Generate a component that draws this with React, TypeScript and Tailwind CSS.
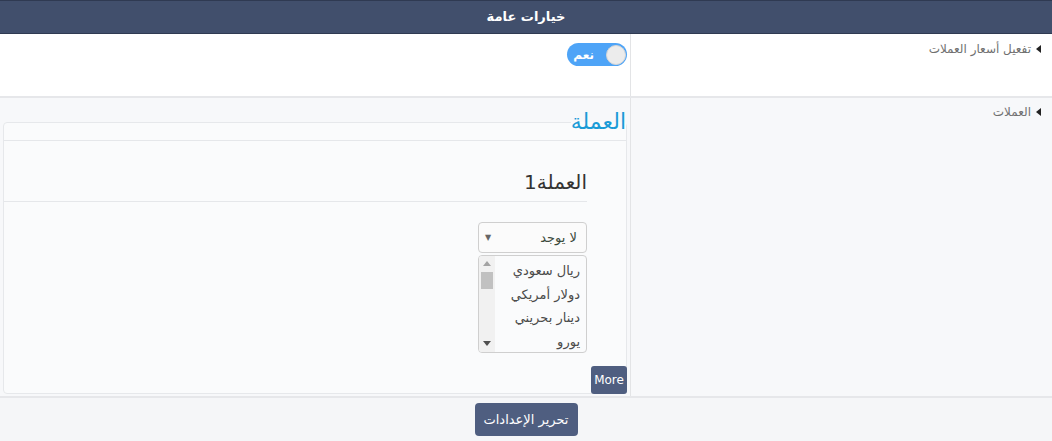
import React from "react";

function Tri() {
  return (
    <svg width="5" height="8" viewBox="0 0 5 8" className="shrink-0 mt-[5px]">
      <polygon points="5,0 5,8 0,4" fill="#222" />
    </svg>
  );
}

export default function App() {
  const options = ["ريال سعودي", "دولار أمريكي", "دينار بحريني", "يورو"];
  return (
    <div dir="rtl" className="w-[1052px] h-[441px] font-['DejaVu_Sans',sans-serif] text-[12px] bg-white overflow-hidden">
      <div className="h-[34px] bg-[#414f6c] border-t border-b border-[#2f3a52] flex items-center justify-center text-white font-bold text-[13px]">
        خيارات عامة
      </div>

      <div className="flex h-[64px] border-b-2 border-[#e6e7ea] bg-white">
        <div className="w-[422px] border-l border-[#e3e4e6] pr-[11px] pt-[6px] flex items-start gap-[5px] text-[#707070]">
          <Tri />
          <span>تفعيل أسعار العملات</span>
        </div>
        <div className="flex-1 pt-[9px] pr-[3px]">
          <div className="w-[60px] h-[23px] rounded-full bg-[#4ea4f7] flex items-center pr-[1px] gap-[12px]">
            <div className="w-[20px] h-[20px] rounded-full bg-[#ececec] border border-[#d6d6d6]" />
            <span className="text-white font-bold text-[12px] leading-none">نعم</span>
          </div>
        </div>
      </div>

      <div className="flex h-[300px] bg-[#f7f8fa] border-b-2 border-[#e6e7ea]">
        <div className="w-[422px] border-l border-[#e3e4e6] pr-[11px] pt-[5px] flex items-start gap-[5px] text-[#707070]">
          <Tri />
          <span>العملات</span>
        </div>
        <div className="flex-1 px-[3px] pt-[11px]">
          <fieldset className="border border-[#e6e8eb] rounded-[4px] bg-[#fafbfc] h-[285px] flex flex-col">
            <legend className="text-[22px] leading-[26px] text-[#1a9bd7] pr-0">العملة</legend>
            <div className="h-[6px] border-b border-[#e5e7ea]" />
            <div className="mr-[39px] pt-[27px] pb-[5px] border-b border-[#e5e7ea] text-[20px] leading-[28px] text-[#333]">
              العملة1
            </div>
            <div className="mr-[39px] mt-[20px] w-[109px]">
              <div className="h-[31px] border border-[#cfcfcf] rounded-[4px] bg-[#fbfbfb] flex items-center justify-between pr-[9px] pl-[6px] text-[13px] text-[#3b4a3b]">
                <span>لا يوجد</span>
                <span className="text-[8px] text-[#666]">▼</span>
              </div>
              <div className="mt-[2px] h-[98px] border border-[#cfcfcf] rounded-[4px] bg-[#fafbfc] flex overflow-hidden">
                <div className="flex-1 pr-[6px] pt-[3px] text-[13px] leading-[23.5px] text-[#4a4a4a]">
                  {options.map((o) => (
                    <div key={o}>{o}</div>
                  ))}
                </div>
                <div className="w-[16px] bg-[#f1f1f1] flex flex-col items-center">
                  <svg width="8" height="5" viewBox="0 0 8 5" className="mt-[5px]">
                    <polygon points="0,5 8,5 4,0" fill="#a3a3a3" />
                  </svg>
                  <div className="w-[12px] h-[17px] bg-[#c1c1c1] mt-[6px]" />
                  <div className="flex-1" />
                  <svg width="8" height="5" viewBox="0 0 8 5" className="mb-[6px]">
                    <polygon points="0,0 8,0 4,5" fill="#505050" />
                  </svg>
                </div>
              </div>
            </div>
            <div className="flex-1" />
            <div className="flex justify-start -mr-[1px] -mb-[1px]">
              <div className="w-[36px] h-[28px] rounded-[3px] bg-[#4f5e80] text-white text-[12px] flex items-center justify-center">
                More
              </div>
            </div>
          </fieldset>
        </div>
      </div>

      <div className="h-[43px] bg-[#f5f6f8] flex justify-center pt-[5px]">
        <div className="w-[103px] h-[33px] rounded-[4px] bg-[#4f5e80] text-white text-[13px] flex items-center justify-center">
          تحرير الإعدادات
        </div>
      </div>
    </div>
  );
}
